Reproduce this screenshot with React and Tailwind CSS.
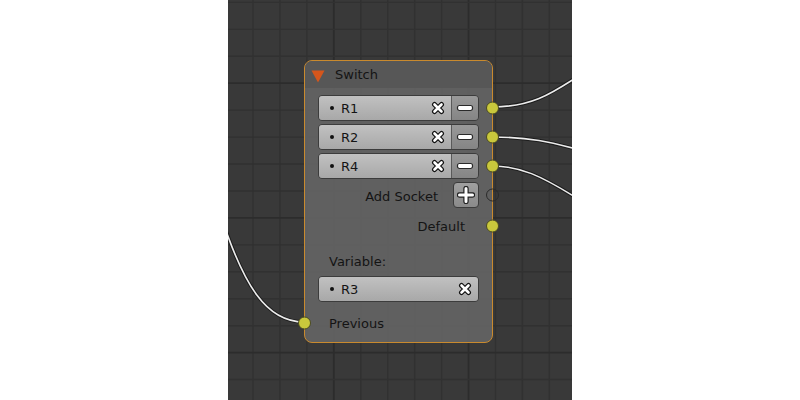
import React from 'react';

const gridX = Array.from({ length: 14 }, (_, i) => 25 + i * 26.94);
const gridY = Array.from({ length: 15 }, (_, i) => 2.4 + i * 26.94);

const XIcon = () => (
  <svg width="14" height="14" viewBox="0 0 14 14">
    <path d="M3.5 3.5 L10.5 10.5 M10.5 3.5 L3.5 10.5" stroke="#111" strokeWidth="5" strokeLinecap="round" fill="none" />
    <path d="M3.5 3.5 L10.5 10.5 M10.5 3.5 L3.5 10.5" stroke="#fff" strokeWidth="2.6" strokeLinecap="round" fill="none" />
  </svg>
);

const MinusIcon = () => (
  <svg width="18" height="8" viewBox="0 0 18 8">
    <rect x="1.5" y="1.5" width="15" height="5" rx="2" fill="#fff" stroke="#2a2a2a" strokeWidth="1.2" />
  </svg>
);

const PlusIcon = () => (
  <svg width="18" height="18" viewBox="0 0 18 18">
    <path d="M9 2.5 V15.5 M2.5 9 H15.5" stroke="#222" strokeWidth="5.4" strokeLinecap="round" fill="none" />
    <path d="M9 2.5 V15.5 M2.5 9 H15.5" stroke="#fff" strokeWidth="3" strokeLinecap="round" fill="none" />
  </svg>
);

const Socket = ({ side = 'right', empty = false }) => (
  <span
    className={
      (side === 'right' ? 'right-[-7px] ' : 'left-[-7px] ') +
      (empty
        ? 'border-[#2a2a2a] bg-transparent '
        : 'border-[#4a4a22] bg-[#c9c83c] ') +
      'absolute top-1/2 -translate-y-1/2 w-[13px] h-[13px] rounded-full border'
    }
  />
);

const Field = ({ label, removable }) => (
  <div className="flex h-[26px] rounded-[4px] border border-[#3c3c3c] overflow-hidden">
    <div className="flex-1 flex items-center pl-[11px] pr-[6px] bg-gradient-to-b from-[#c1c1c1] to-[#a8a8a8]">
      <span className="w-[4px] h-[4px] rounded-full bg-[#111] mr-[7px]" />
      <span className="flex-1 pt-[2px]">{label}</span>
      <XIcon />
    </div>
    {removable && (
      <div className="w-[27px] flex items-center justify-center border-l border-[#5a5a5a] bg-gradient-to-b from-[#999] to-[#858585]">
        <MinusIcon />
      </div>
    )}
  </div>
);

const Node = () => (
  <div className="absolute left-[76px] top-[60px] w-[189px] h-[283px] rounded-[8px] border border-[#c98a2e] bg-[#626262]/95 text-[13px] text-[#141414] font-['DejaVu_Sans',sans-serif]">
    <div className="h-[27px] flex items-center pl-[6px] pt-[1px] rounded-t-[7px] bg-[#575757]">
      <svg width="14" height="13" viewBox="0 0 14 13" className="mr-[10px] mt-[2px]">
        <path d="M0.5 0.5 H13.5 L7 12.5 Z" fill="#d5561c" />
      </svg>
      <span>Switch</span>
    </div>

    <div className="flex flex-col">
      {['R1', 'R2', 'R4'].map((r, i) => (
        <div key={r} className={(i === 0 ? 'mt-[7px] ' : 'mt-[3px] ') + 'relative px-[13px]'}>
          <Field label={r} removable />
          <Socket />
        </div>
      ))}

      <div className="relative mt-[3px] h-[26px] px-[13px] flex items-center justify-end">
        <span className="mr-[15px] pt-[3px]">Add Socket</span>
        <div className="w-[26px] h-[26px] flex items-center justify-center rounded-[4px] border border-[#3c3c3c] bg-gradient-to-b from-[#a0a0a0] to-[#8a8a8a]">
          <PlusIcon />
        </div>
        <Socket empty />
      </div>

      <div className="relative mt-[5px] h-[26px] pr-[27px] flex items-center justify-end">
        <span className="pt-[2px]">Default</span>
        <Socket />
      </div>

      <div className="mt-[9px] h-[26px] pl-[24px] flex items-center">
        <span className="pt-[2px]">Variable:</span>
      </div>

      <div className="mt-[2px] px-[13px]">
        <Field label="R3" />
      </div>

      <div className="relative mt-[8px] h-[26px] pl-[24px] flex items-center">
        <span className="pt-[2px]">Previous</span>
        <Socket side="left" />
      </div>
    </div>
  </div>
);

const Wire = ({ d }) => (
  <g>
    <path d={d} stroke="#1c1c1c" strokeWidth="3.6" fill="none" />
    <path d={d} stroke="#ececec" strokeWidth="1.6" fill="none" />
  </g>
);

export default function App() {
  return (
    <div className="w-[800px] h-[400px] bg-white flex justify-center">
      <div className="relative w-[344px] h-[400px] overflow-hidden bg-[#393939]">
        <svg className="absolute inset-0" width="344" height="400">
          {gridX.map((x, i) => (
            <line key={'x' + i} x1={x} y1="0" x2={x} y2="400" stroke={i % 5 === 3 ? '#2c2c2c' : '#313131'} strokeWidth={i % 5 === 3 ? 1.8 : 1.4} />
          ))}
          {gridY.map((y, i) => (
            <line key={'y' + i} x1="0" y1={y} x2="344" y2={y} stroke={i % 5 === 3 ? '#2c2c2c' : '#313131'} strokeWidth={i % 5 === 3 ? 1.8 : 1.4} />
          ))}
          <Wire d="M264 107 C302 107, 322 95, 352 75" />
          <Wire d="M264 137 C302 137, 322 142, 352 150" />
          <Wire d="M264 166 C292 166, 312 175, 352 200" />
          <Wire d="M76 322 C40 322, 15 290, -12 200" />
        </svg>
        <Node />
      </div>
    </div>
  );
}
